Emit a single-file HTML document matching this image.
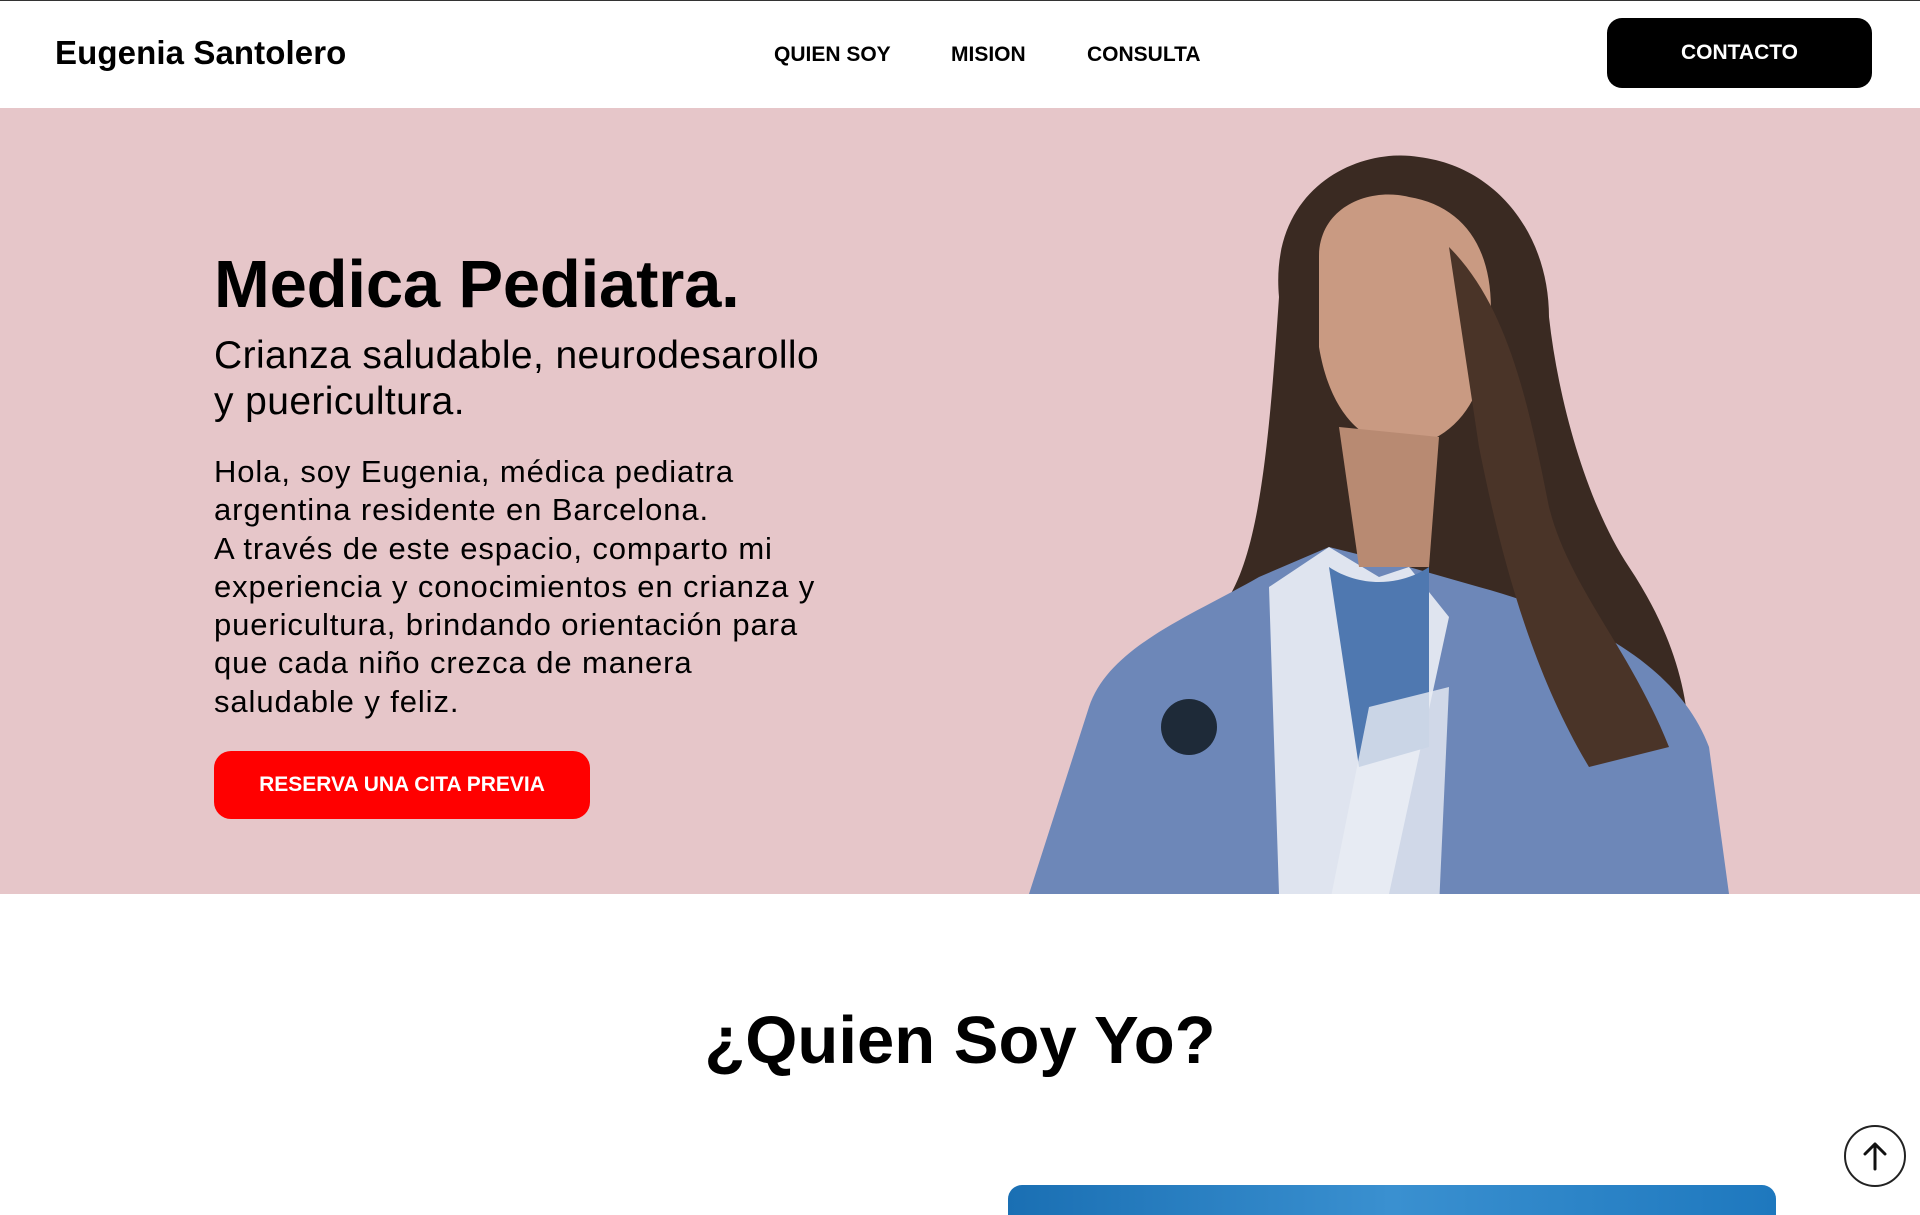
<!DOCTYPE html>
<html><head><meta charset="utf-8"><style>
*{margin:0;padding:0;box-sizing:border-box}
body{width:1920px;height:1200px;overflow:hidden;background:#fff;font-family:"Liberation Sans",Arial,sans-serif;color:#000;position:relative}
.top{position:absolute;left:0;top:0;width:1920px;height:1px;background:#333}
.logo{position:absolute;left:55px;top:34px;font-size:33px;font-weight:bold;letter-spacing:0.1px}
.nav a{position:absolute;top:43px;font-size:21px;font-weight:bold;color:#000;text-decoration:none}
.btn{position:absolute;left:1607px;top:18px;width:265px;height:70px;background:#000;border-radius:15px;color:#fff;font-weight:bold;font-size:21px;display:flex;align-items:center;justify-content:center}
.hero{position:absolute;left:0;top:108px;width:1920px;height:786px;background:#e6c6c9;overflow:hidden}
h1{position:absolute;left:214px;font-size:67px;font-weight:bold;letter-spacing:-0.2px}
.sub{position:absolute;left:214px;font-size:39px;line-height:46px;letter-spacing:0.4px}
.p{position:absolute;left:214px;font-size:31px;line-height:38.3px;letter-spacing:0.9px}
.cta{position:absolute;left:214px;width:376px;height:68px;background:#ff0000;border-radius:17px;color:#fff;font-weight:bold;font-size:21px;display:flex;align-items:center;justify-content:center}
h2{position:absolute;left:0;width:1920px;text-align:center;top:1002px;font-size:67px;font-weight:bold}
.up{position:absolute;left:1844px;top:1125px;width:62px;height:62px;border:2px solid #222;border-radius:50%;background:#fff}
.bar{position:absolute;left:1008px;top:1185px;width:768px;height:30px;border-radius:14px 14px 0 0;background:linear-gradient(90deg,#1a6fb3,#3a90d0,#1e78be)}
</style></head><body>
<div class="top"></div>
<div class="logo">Eugenia Santolero</div>
<div class="nav"><a style="left:774px">QUIEN SOY</a><a style="left:951px">MISION</a><a style="left:1087px">CONSULTA</a></div>
<div class="btn">CONTACTO</div>
<div class="hero">
<svg style="position:absolute;left:1029px;top:39px" width="728" height="747" viewBox="0 0 728 747">
<path d="M250 150 C240 40 330 0 390 10 C470 20 520 90 520 170 C530 260 560 360 600 420 C640 480 660 540 660 600 L500 650 L240 640 L200 450 C230 400 240 300 250 150Z" fill="#3a2a22"/>
<path d="M60 560 C80 500 160 470 230 430 L300 400 L380 420 L450 440 C560 470 650 520 680 600 L700 747 L0 747 Z" fill="#6d87b8"/>
<path d="M240 440 L300 400 L350 430 L380 420 L420 470 L360 747 L250 747 Z" fill="#dfe4ef"/>
<path d="M300 420 C330 440 370 440 400 420 L400 600 L330 620 Z" fill="#4f78b0"/>
<path d="M290 110 C290 60 340 40 380 50 C440 60 470 110 460 190 C455 250 430 290 380 300 C330 300 300 260 290 200 Z" fill="#c99a82"/>
<path d="M310 280 L330 420 L400 420 L410 290 Z" fill="#b88a72"/>
<path d="M420 100 C480 160 500 260 520 360 C540 440 600 500 640 600 L560 620 C500 520 470 400 450 300 Z" fill="#4a3428"/>
<circle cx="160" cy="580" r="28" fill="#1e2a38"/>
<path d="M410 760 L300 760 L340 560 L420 540 Z" fill="#e8ecf4" opacity=".8"/>
</svg>
<h1 style="top:138px">Medica Pediatra.</h1>
<div class="sub" style="top:225px">Crianza saludable, neurodesarollo<br>y puericultura.</div>
<div class="p" style="top:345px">Hola, soy Eugenia, médica pediatra<br>argentina residente en Barcelona.<br>A través de este espacio, comparto mi<br>experiencia y conocimientos en crianza y<br>puericultura, brindando orientación para<br>que cada niño crezca de manera<br>saludable y feliz.</div>
<div class="cta" style="top:643px">RESERVA UNA CITA PREVIA</div>
</div>
<h2>¿Quien Soy Yo?</h2>
<div class="up"><svg width="58" height="58" viewBox="0 0 58 58"><path d="M29 42 V17 M19 27 L29 17 L39 27" stroke="#111" stroke-width="3" fill="none" stroke-linecap="round" stroke-linejoin="round"/></svg></div>
<div class="bar"></div>
</body></html>
